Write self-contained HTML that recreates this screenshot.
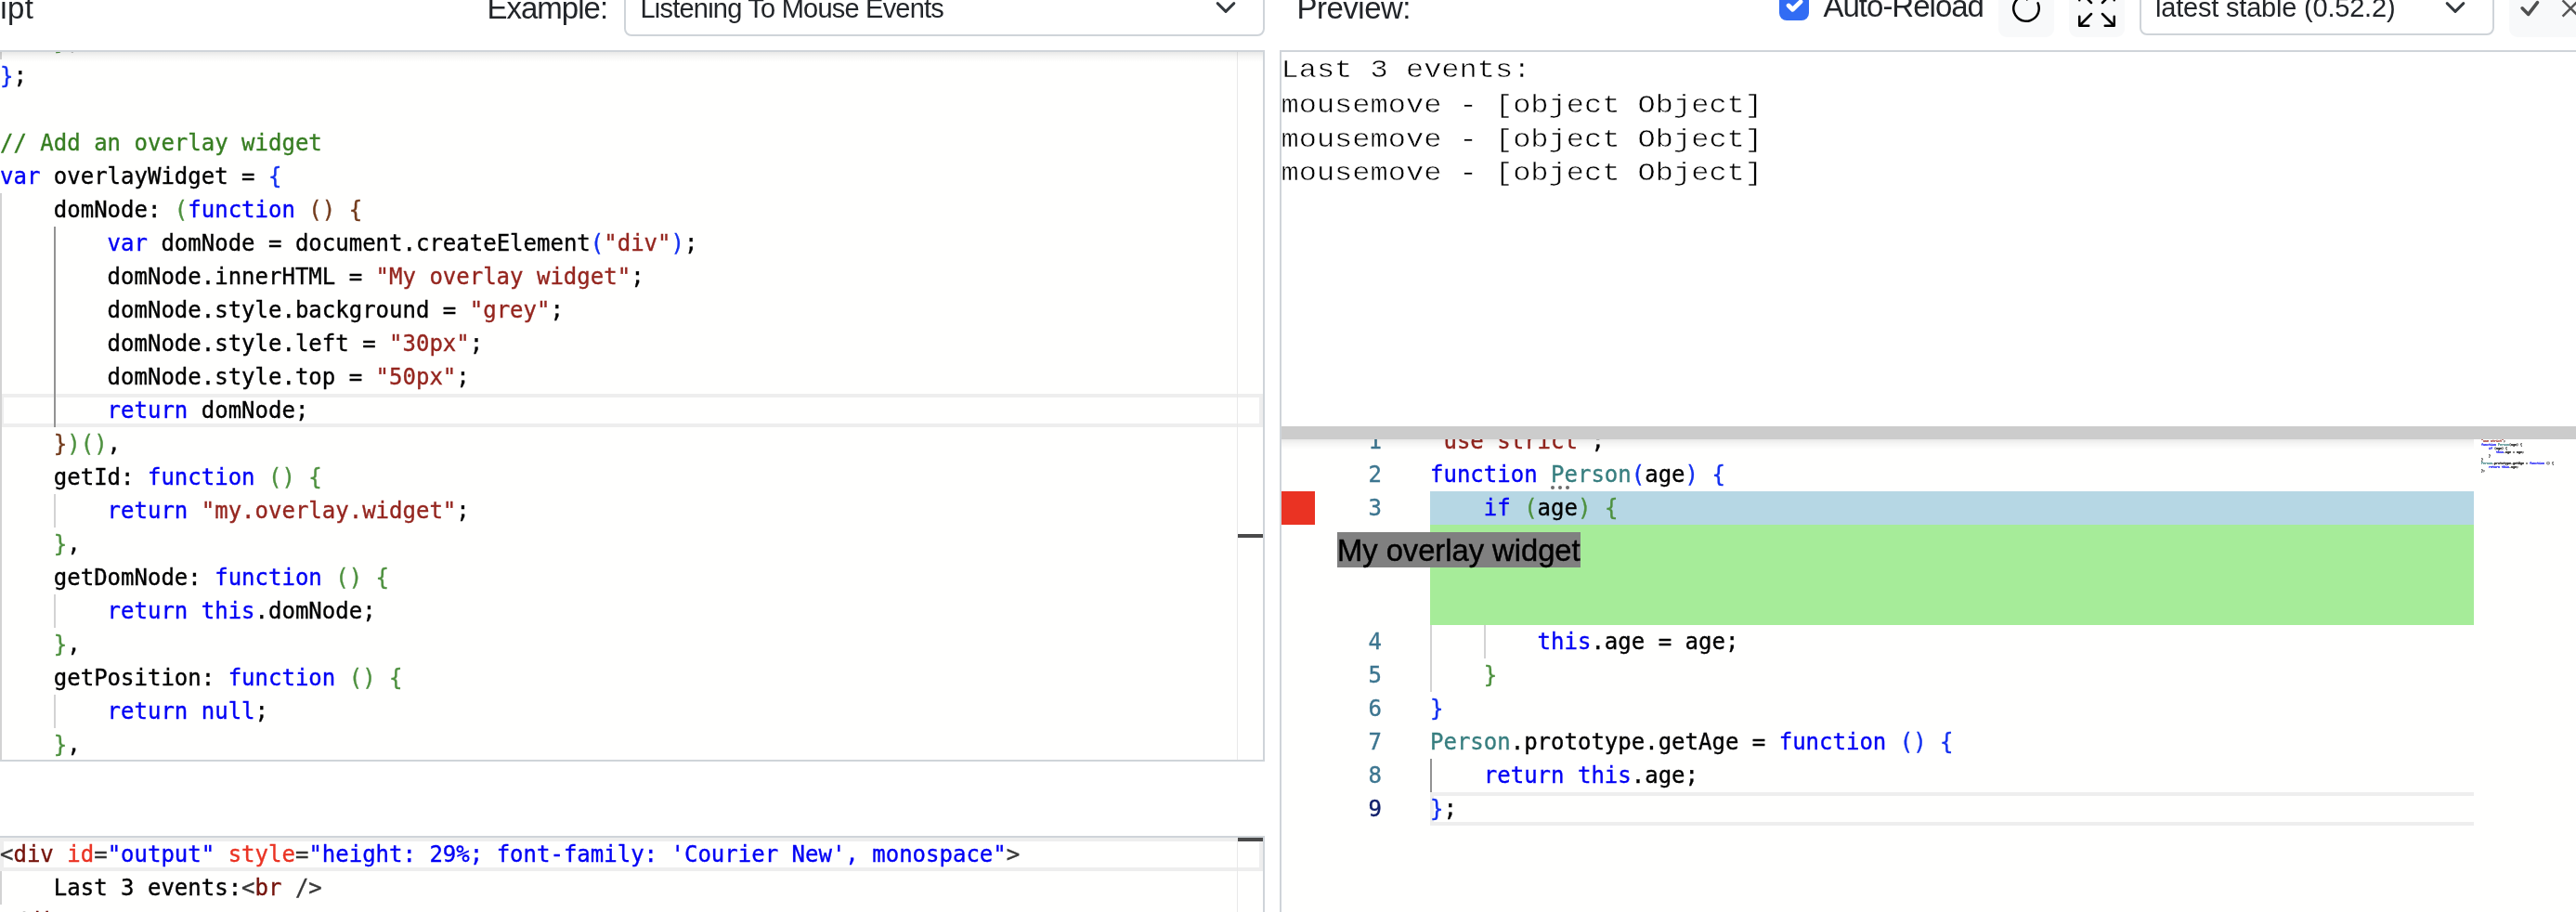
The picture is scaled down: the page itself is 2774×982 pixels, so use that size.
<!DOCTYPE html>
<html lang="en"><head><meta charset="utf-8"><title>Monaco Editor Playground</title>
<style>
html,body{margin:0;padding:0}
body{width:2774px;height:982px;overflow:hidden;background:#fff;position:relative;font-family:"Liberation Sans",Arial,sans-serif;color:#222529}
.a{position:absolute}
.hd{position:absolute;white-space:nowrap;line-height:40px;color:#222529}
.sel{position:absolute;box-sizing:border-box;border:2px solid #cfd4d9;border-radius:8px;background:#fff}
.btn{position:absolute;box-sizing:border-box;background:#f8f9fa;border-radius:9px}
.ed{position:absolute;box-sizing:border-box;border:2px solid #cfd4d9;background:#fffffe;overflow:hidden}
.in{position:absolute;left:0;top:0;right:0;bottom:0;overflow:hidden}
.code,.ln{font-family:"DejaVu Sans Mono","Liberation Mono",monospace;font-size:24px;line-height:36px;white-space:pre;color:#000;-webkit-text-stroke:0.35px}
.ln{position:absolute;height:36px;left:0}
.g{position:absolute;width:2px}
.cur{position:absolute;box-sizing:border-box;border:4px solid #eee;height:36px}
.sh{position:absolute;left:0;right:0;top:0;height:12px;background:linear-gradient(to bottom,rgba(0,0,0,.085) 0,rgba(0,0,0,.035) 5px,rgba(0,0,0,0) 11px)}
.ovl{position:absolute;width:1px;top:0;bottom:0;background:#e9e9e9}
.num{position:absolute;left:36px;width:72px;height:36px;text-align:right;color:#3d7690;font-family:"DejaVu Sans Mono","Liberation Mono",monospace;font-size:24px;line-height:36px;-webkit-text-stroke:0.35px}
.out{font-family:"Liberation Mono","Courier New",monospace;font-size:32px;line-height:43.79px;white-space:pre;color:#000;-webkit-text-stroke:0.6px #fff;transform:scaleY(.845);transform-origin:0 0}
.mm{position:absolute;font-family:"DejaVu Sans Mono","Liberation Mono",monospace;font-size:16.6px;line-height:20px;white-space:pre;color:#000;font-weight:bold;-webkit-text-stroke:0.75px;transform:scale(.2);transform-origin:0 0}
</style></head>
<body><div id="root" style="position:absolute;left:0;top:0;width:2774px;height:982px;overflow:hidden;will-change:transform">
<!-- header -->
<div class="hd" id="h_js" style="right:2737.5px;top:-11px;font-size:33px;letter-spacing:0.5px">JavaScript</div>
<div class="hd" id="h_ex" style="left:524.5px;top:-11.5px;font-size:33px;letter-spacing:-1px">Example:</div>
<div class="sel" style="left:672px;top:-24px;width:690px;height:62.5px"></div>
<div class="hd" id="h_s1" style="left:689.5px;top:-11.3px;font-size:29px;letter-spacing:-0.78px">Listening To Mouse Events</div>
<svg class="a" style="left:1304px;top:-4px" width="32" height="24" viewBox="0 0 16 12"><path fill="none" stroke="#353a3f" stroke-linecap="round" stroke-linejoin="round" stroke-width="1.5" d="M3.6 3.8 8 8.2 12.4 3.8"/></svg>
<div class="hd" id="h_pv" style="left:1396.5px;top:-11.5px;font-size:33px;letter-spacing:-0.5px">Preview:</div>
<div class="a" style="left:1916px;top:-10px;width:32px;height:32px;border-radius:8px;background:#316cf4"><svg width="32" height="32" viewBox="0 0 20 20"><path fill="none" stroke="#fff" stroke-linecap="round" stroke-linejoin="round" stroke-width="3" d="M6.3 10 9 12.7 14.4 7.4"/></svg></div>
<div class="hd" id="h_ar" style="left:1963.5px;top:-13.5px;font-size:33px;letter-spacing:-1px">Auto-Reload</div>
<div class="btn" style="left:2152px;top:-22px;width:60px;height:62px"></div>
<svg class="a" style="left:2162px;top:-11px" width="40" height="40" viewBox="0 0 16 16" fill="#000"><path fill-rule="evenodd" d="M8 3a5 5 0 1 0 4.546 2.914.5.5 0 0 1 .908-.417A6 6 0 1 1 8 2v1z"/><path d="M8 4.466V.534a.25.25 0 0 1 .41-.192l2.36 1.966c.12.1.12.284 0 .384L8.41 4.658A.25.25 0 0 1 8 4.466z"/></svg>
<div class="btn" style="left:2228px;top:-22px;width:60px;height:62px"></div>
<svg class="a" style="left:2238px;top:-11px" width="40" height="40" viewBox="0 0 16 16" fill="none" stroke="#000" stroke-width="1" stroke-linecap="round" stroke-linejoin="round"><path d="M5.6 10.4.6 15.4M.5 11.5v4h4M10.4 10.4l5 5M15.5 11.5v4h-4M10.4 5.6l5-5M11.5.5h4v4M5.6 5.6.6.6M.5 4.5v-4h4"/></svg>
<div class="sel" style="left:2304px;top:-24px;width:382px;height:62px"></div>
<div class="hd" id="h_s2" style="left:2321px;top:-12.5px;font-size:29px;letter-spacing:-0.2px">latest stable (0.52.2)</div>
<svg class="a" style="left:2628px;top:-4px" width="32" height="24" viewBox="0 0 16 12"><path fill="none" stroke="#353a3f" stroke-linecap="round" stroke-linejoin="round" stroke-width="1.5" d="M3.6 3.8 8 8.2 12.4 3.8"/></svg>
<div class="btn" style="left:2702px;top:-22px;width:120px;height:62px"></div>
<svg class="a" style="left:2708px;top:-6px" width="34" height="30" viewBox="0 0 34 30"><path fill="none" stroke="#4f4f4f" stroke-width="3.6" stroke-linecap="round" stroke-linejoin="round" d="M8.1 14.8 14.7 21.4 24.5 8.7"/></svg>
<svg class="a" style="left:2754px;top:-8px" width="34" height="34" viewBox="0 0 34 34"><path fill="none" stroke="#555" stroke-width="2.5" d="M5.6 8.4 22.8 25.6M22.8 8.4 5.6 25.6"/></svg>
<!-- javascript editor -->
<div class="ed" style="left:-2px;top:54px;width:1364px;height:766px"><div class="in">
<div class="cur" style="left:0;top:368px;width:1360px"></div>
<div class="g" style="left:0px;top:-28px;height:36px;background:#d3d3d3"></div>
<div class="g" style="left:0px;top:152px;height:800px;background:#d3d3d3"></div>
<div class="g" style="left:58px;top:188px;height:216px;background:#939393"></div>
<div class="g" style="left:58px;top:476px;height:36px;background:#d3d3d3"></div>
<div class="g" style="left:58px;top:584px;height:36px;background:#d3d3d3"></div>
<div class="g" style="left:58px;top:692px;height:36px;background:#d3d3d3"></div>
<div class="ln" style="top:-29px;left:0px">    <span style="color:#4e913f">}</span>,</div>
<div class="ln" style="top:8px;left:0px"><span style="color:#1330f0">}</span>;</div>
<div class="ln" style="top:44px;left:0px"></div>
<div class="ln" style="top:80px;left:0px"><span style="color:#377e22">// Add an overlay widget</span></div>
<div class="ln" style="top:116px;left:0px"><span style="color:#0000f5">var</span> overlayWidget = <span style="color:#1330f0">{</span></div>
<div class="ln" style="top:152px;left:0px">    domNode: <span style="color:#4e913f">(</span><span style="color:#0000f5">function</span> <span style="color:#733c1d">()</span> <span style="color:#733c1d">{</span></div>
<div class="ln" style="top:188px;left:0px">        <span style="color:#0000f5">var</span> domNode = document.createElement<span style="color:#1330f0">(</span><span style="color:#95261f">"div"</span><span style="color:#1330f0">)</span>;</div>
<div class="ln" style="top:224px;left:0px">        domNode.innerHTML = <span style="color:#95261f">"My overlay widget"</span>;</div>
<div class="ln" style="top:260px;left:0px">        domNode.style.background = <span style="color:#95261f">"grey"</span>;</div>
<div class="ln" style="top:296px;left:0px">        domNode.style.left = <span style="color:#95261f">"30px"</span>;</div>
<div class="ln" style="top:332px;left:0px">        domNode.style.top = <span style="color:#95261f">"50px"</span>;</div>
<div class="ln" style="top:368px;left:0px">        <span style="color:#0000f5">return</span> domNode;</div>
<div class="ln" style="top:404px;left:0px">    <span style="color:#733c1d">}</span><span style="color:#4e913f">)</span><span style="color:#4e913f">()</span>,</div>
<div class="ln" style="top:440px;left:0px">    getId: <span style="color:#0000f5">function</span> <span style="color:#4e913f">()</span> <span style="color:#4e913f">{</span></div>
<div class="ln" style="top:476px;left:0px">        <span style="color:#0000f5">return</span> <span style="color:#95261f">"my.overlay.widget"</span>;</div>
<div class="ln" style="top:512px;left:0px">    <span style="color:#4e913f">}</span>,</div>
<div class="ln" style="top:548px;left:0px">    getDomNode: <span style="color:#0000f5">function</span> <span style="color:#4e913f">()</span> <span style="color:#4e913f">{</span></div>
<div class="ln" style="top:584px;left:0px">        <span style="color:#0000f5">return</span> <span style="color:#0000f5">this</span>.domNode;</div>
<div class="ln" style="top:620px;left:0px">    <span style="color:#4e913f">}</span>,</div>
<div class="ln" style="top:656px;left:0px">    getPosition: <span style="color:#0000f5">function</span> <span style="color:#4e913f">()</span> <span style="color:#4e913f">{</span></div>
<div class="ln" style="top:692px;left:0px">        <span style="color:#0000f5">return</span> <span style="color:#0000f5">null</span>;</div>
<div class="ln" style="top:728px;left:0px">    <span style="color:#4e913f">}</span>,</div>
<div class="ovl" style="left:1332px"></div>
<div class="a" style="left:1333px;top:519px;width:27px;height:4px;background:#4a4a4a"></div>
<div class="sh"></div>
</div></div>
<!-- html editor -->
<div class="ed" style="left:-2px;top:900px;width:1364px;height:300px"><div class="in">
<div class="cur" style="left:0;top:0;width:1360px"></div>
<div class="g" style="left:0px;top:36px;height:36px;background:#d3d3d3"></div>
<div class="ln" style="top:0px;left:0px"><span style="color:#383838">&lt;</span><span style="color:#75140c">div</span> <span style="color:#ea3323">id</span><span style="color:#383838">=</span><span style="color:#0000f5">"output"</span> <span style="color:#ea3323">style</span><span style="color:#383838">=</span><span style="color:#0000f5">"height: 29%; font-family: 'Courier New', monospace"</span><span style="color:#383838">&gt;</span></div>
<div class="ln" style="top:36px;left:0px">    Last 3 events:<span style="color:#383838">&lt;</span><span style="color:#75140c">br</span> <span style="color:#383838">/&gt;</span></div>
<div class="ln" style="top:72px;left:0px"><span style="color:#383838">&lt;/</span><span style="color:#75140c">div</span><span style="color:#383838">&gt;</span></div>
<div class="ovl" style="left:1332px"></div>
<div class="a" style="left:1333px;top:0;width:27px;height:4px;background:#4a4a4a"></div>
</div></div>
<!-- preview -->
<div class="a" style="left:1378px;top:54px;width:1500px;height:1100px;box-sizing:border-box;border:2px solid #cfd4d9;background:#fff;overflow:hidden"><div class="in">
<div class="out a" id="out" style="left:-0.5px;top:1.8px">Last 3 events:
mousemove - [object Object]
mousemove - [object Object]
mousemove - [object Object]</div>
<div class="a" style="left:0;right:0;top:403px;height:14px;background:#ccc"></div>
<div class="a" style="left:0;top:417px;width:1500px;height:973px;background:#fffffe;overflow:hidden">
<div class="a" style="left:0;top:56px;width:36px;height:36px;background:#ea3323"></div>
<div class="a" style="left:160px;top:56px;width:1124px;height:36px;background:#b6d7e4"></div>
<div class="a" style="left:160px;top:92px;width:1124px;height:108px;background:#a6ec99"></div>
<div class="cur" style="left:160px;top:380px;width:1124px;border-right-width:0"></div>
<div class="g" style="left:160px;top:200px;height:72px;background:#d3d3d3"></div>
<div class="g" style="left:218px;top:200px;height:36px;background:#d3d3d3"></div>
<div class="g" style="left:160px;top:344px;height:36px;background:#939393"></div>
<div class="num" style="top:-16px">1</div>
<div class="num" style="top:20px">2</div>
<div class="num" style="top:56px">3</div>
<div class="num" style="top:200px">4</div>
<div class="num" style="top:236px">5</div>
<div class="num" style="top:272px">6</div>
<div class="num" style="top:308px">7</div>
<div class="num" style="top:344px">8</div>
<div class="num" style="top:380px;color:#11206b">9</div>
<div class="ln" style="top:-16px;left:160px"><span style="color:#95261f">"use strict"</span>;</div>
<div class="ln" style="top:20px;left:160px"><span style="color:#0000f5">function</span> <span style="color:#377e7f">Person</span><span style="color:#1330f0">(</span>age<span style="color:#1330f0">)</span> <span style="color:#1330f0">{</span></div>
<div class="ln" style="top:56px;left:160px">    <span style="color:#0000f5">if</span> <span style="color:#4e913f">(</span>age<span style="color:#4e913f">)</span> <span style="color:#4e913f">{</span></div>
<div class="ln" style="top:200px;left:160px">        <span style="color:#0000f5">this</span>.age = age;</div>
<div class="ln" style="top:236px;left:160px">    <span style="color:#4e913f">}</span></div>
<div class="ln" style="top:272px;left:160px"><span style="color:#1330f0">}</span></div>
<div class="ln" style="top:308px;left:160px"><span style="color:#377e7f">Person</span>.prototype.getAge = <span style="color:#0000f5">function</span> <span style="color:#1330f0">()</span> <span style="color:#1330f0">{</span></div>
<div class="ln" style="top:344px;left:160px">    <span style="color:#0000f5">return</span> <span style="color:#0000f5">this</span>.age;</div>
<div class="ln" style="top:380px;left:160px"><span style="color:#1330f0">}</span>;</div>
<div class="a" style="left:290px;top:50px;width:4px;height:4px;border-radius:2px;background:#6c6c6c"></div><div class="a" style="left:298px;top:50px;width:4px;height:4px;border-radius:2px;background:#6c6c6c"></div><div class="a" style="left:306px;top:50px;width:4px;height:4px;border-radius:2px;background:#6c6c6c"></div>
<div class="a" id="ow" style="left:60px;top:100px;width:262px;height:38px;background:#808080;color:#000;font-size:32.7px;line-height:40px;white-space:nowrap;-webkit-text-stroke:0.45px">My overlay widget</div>
<div class="mm" style="left:1292px;top:0"><span style="color:#95261f">"use strict"</span>;
<span style="color:#0000f5">function</span> <span style="color:#377e7f">Person</span>(age) {
    <span style="color:#0000f5">if</span> (age) {
        <span style="color:#0000f5">this</span>.age = age;
    }
}
<span style="color:#377e7f">Person</span>.prototype.getAge = <span style="color:#0000f5">function</span> () {
    <span style="color:#0000f5">return</span> <span style="color:#0000f5">this</span>.age;
};</div>
<div class="sh" style="right:auto;width:1284px"></div>
</div>
</div></div>
</div></body></html>
